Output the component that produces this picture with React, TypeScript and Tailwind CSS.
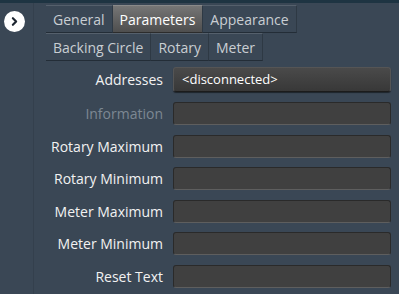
import { ChevronRight } from "lucide-react";

// pestañas de la cabecera
const mainTabs = ["General", "Parameters", "Appearance"];
const subTabs = ["Backing Circle", "Rotary", "Meter"];

type Field = { label: string; value?: string; disabled?: boolean };

const fields: Field[] = [
    { label: "Information", disabled: true },
    { label: "Rotary Maximum" },
    { label: "Rotary Minimum" },
    { label: "Meter Maximum" },
    { label: "Meter Minimum" },
    { label: "Reset Text" },
];

const Tab = ({ label, active }: { label: string; active?: boolean }) => (
    <div
        className={`h-[28px] px-[7px] flex items-center border-t border-b border-r text-[14px] ${active
            ? "bg-linear-to-b from-[#767676] to-[#4e4e4e] text-white border-t-[#8a8a8a] border-b-[#2c2c2c] border-r-[#2e3944]"
            : "text-[#c9ced3] border-t-[#55606c] border-b-[#232d37] border-r-[#2e3944]"}`}
    >
        {label}
    </div>
);

const Label = ({ text, disabled }: { text: string; disabled?: boolean }) => (
    <div className={`w-[117px] text-right text-[14px] ${disabled ? "text-[#7d8893]" : "text-[#f2f2f2]"}`}>
        {text}
    </div>
);

export default function App() {
    return (
        <div
            className="w-[399px] h-[294px] bg-[#3a4755] border-t-[3px] border-t-[#1e3442] flex overflow-hidden"
            style={{ fontFamily: '"Open Sans", "Noto Sans", sans-serif' }}
        >
            {/* columna izquierda con el botón circular */}
            <div className="w-[34px] shrink-0 border-r border-r-[#34404d] pt-[8px] flex justify-center">
                <div className="w-[21px] h-[21px] rounded-full bg-white flex items-center justify-center ml-[-4px]">
                    <ChevronRight size={13} strokeWidth={4} className="text-[#1d2530]" />
                </div>
            </div>

            <div className="flex-1 pl-[12px] pt-[2px]">
                <div className="flex">
                    {mainTabs.map((t) => (
                        <Tab key={t} label={t} active={t === "Parameters"} />
                    ))}
                </div>
                <div className="flex">
                    {subTabs.map((t) => (
                        <Tab key={t} label={t} />
                    ))}
                </div>

                <div className="flex flex-col mt-[6px] pr-[8px]">
                    {/* Addresses es un botón desplegable, algo más alto */}
                    <div className="flex items-center gap-[10px] h-[25px]">
                        <Label text="Addresses" />
                        <div className="flex-1 h-[25px] rounded-[3px] bg-linear-to-b from-[#4a4a4a] to-[#383838] border border-[#555] border-b-[#1c1c1c] shadow-[0_1px_1px_rgba(0,0,0,0.5)] flex items-center px-[8px] text-[13px] text-white">
                            {"<disconnected>"}
                        </div>
                    </div>
                    <div className="flex flex-col gap-[9.5px] mt-[10px]">
                        {fields.map((f) => (
                            <div key={f.label} className="flex items-center gap-[10px] h-[23px]">
                                <Label text={f.label} disabled={f.disabled} />
                                <div className="flex-1 h-[23px] rounded-[3px] bg-[#404040] border border-[#2a2a2a] border-b-[#5e5e5e]" />
                            </div>
                        ))}
                    </div>
                </div>
            </div>
        </div>
    );
}
